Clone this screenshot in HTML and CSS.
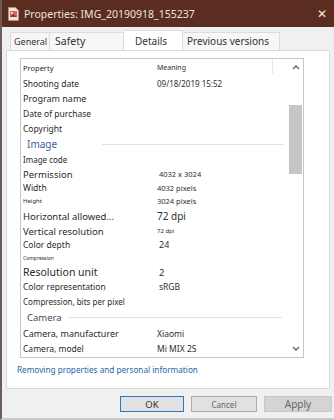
FILE: index.html
```html
<!DOCTYPE html>
<html lang="en">
<head>
  <meta charset="UTF-8"/>
  <title>Properties: IMG_20190918_155237</title>
  <link rel="stylesheet" href="styles.css">
</head>
<body>
  <div class="window">
    <div class="titlebar">
      <svg class="fileicon" width="11" height="14" viewBox="0 0 11 14">
        <path d="M0.5 0.5 H7.5 L10.5 3.5 V13.5 H0.5 Z" fill="#f1e2dd" stroke="#b98a82"/>
        <rect x="2" y="4" width="7" height="6" fill="#cf6a60"/>
        <rect x="3" y="5" width="2" height="2" fill="#f2d0c8"/>
        <path d="M2 10 L5 7 L9 10 Z" fill="#8a3a32"/>
      </svg>
      <span class="title">Properties: IMG_20190918_155237</span>
      <span class="close">&#x2715;</span>
    </div>

    <div class="tabs">
      <div class="tab tab-general">General</div>
      <div class="tab tab-safety">Safety</div>
      <div class="tab tab-details active">Details</div>
      <div class="tab tab-prev">Previous versions</div>
    </div>

    <div class="panel">
      <div class="listbox">
        <div class="list">
          <div class="row head h17"><span class="k f75">Property</span><span class="v f7">Meaning</span></div>
          <div class="row h15"><span class="k f85">Shooting date</span><span class="v f8">09/18/2019 15:52</span></div>
          <div class="row h15"><span class="k f9">Program name</span></div>
          <div class="row h14"><span class="k f85">Date of purchase</span></div>
          <div class="row h16"><span class="k f85">Copyright</span></div>
          <div class="section h16"><span class="sec-title sec-image">Image</span><span class="sec-line line-image"></span></div>
          <div class="row h15"><span class="k f8">Image code</span></div>
          <div class="row h14"><span class="k f95">Permission</span><span class="v f75 nudge">4032 x 3024</span></div>
          <div class="row h13"><span class="k f85">Width</span><span class="v f75">4032 pixels</span></div>
          <div class="row h14"><span class="k f6">Height</span><span class="v f75">3024 pixels</span></div>
          <div class="row h16"><span class="k f95">Horizontal allowed...</span><span class="v f10">72 dpi</span></div>
          <div class="row h14"><span class="k f95">Vertical resolution</span><span class="v f6">72 dpi</span></div>
          <div class="row h13"><span class="k f85">Color depth</span><span class="v f9 nudge">24</span></div>
          <div class="row h14"><span class="k f5">Compression</span></div>
          <div class="row h14"><span class="k f105">Resolution unit</span><span class="v f95 nudge">2</span></div>
          <div class="row h14"><span class="k f85">Color representation</span><span class="v f85 nudge">sRGB</span></div>
          <div class="row h16"><span class="k f8">Compression, bits per pixel</span></div>
          <div class="section h17"><span class="sec-title sec-camera">Camera</span><span class="sec-line line-camera"></span></div>
          <div class="row h15"><span class="k f9">Camera, manufacturer</span><span class="v f85">Xiaomi</span></div>
          <div class="row h15"><span class="k f85">Camera, model</span><span class="v f85">Mi MIX 2S</span></div>
        </div>
        <div class="scrollbar">
          <div class="arrow">
            <svg width="8" height="5" viewBox="0 0 8 5"><path d="M1 4 L4 1 L7 4" fill="none" stroke="#606060" stroke-width="1.3"/></svg>
          </div>
          <div class="track"><div class="thumb"></div></div>
          <div class="arrow">
            <svg width="8" height="5" viewBox="0 0 8 5"><path d="M1 1 L4 4 L7 1" fill="none" stroke="#606060" stroke-width="1.3"/></svg>
          </div>
        </div>
      </div>
      <a class="link" href="#">Removing properties and personal information</a>
    </div>

    <div class="buttons">
      <button class="btn btn-ok">OK</button>
      <button class="btn btn-cancel">Cancel</button>
      <button class="btn btn-apply">Apply</button>
    </div>
  </div>
</body>
</html>
```

FILE: styles.css
```css
body { margin:0; background:#f0f0f0; font-family:"Noto Sans", "Open Sans", sans-serif; color:#222; }
.window { width:332px; height:418px; border-left:2px solid #6d5d58; border-bottom:2px solid #c9c9c9; background:#f0f0f0; overflow:hidden; }

.titlebar { height:27px; background:#5b2d20; display:flex; align-items:center; padding-left:6px; }
.fileicon { margin-right:5px; }
.title { color:#eee3df; font-size:10.5px; flex:1; }
.close { color:#f3eae7; font-size:12px; margin-right:7px; }

.tabs { height:20px; margin-top:3px; padding-left:8px; display:flex; align-items:flex-end; }
.tab { height:18px; box-sizing:border-box; background:#f7f7f7; border:1px solid #dcdcdc; border-bottom:none; color:#333; line-height:17px; }
.tab-general { width:40px; font-size:9px; padding-left:3px; }
.tab-safety { width:74px; font-size:10.5px; padding-left:5px; border-left:none; }
.tab-details { width:59px; font-size:10px; padding-left:11px; height:20px; background:#fff; border-left:none; line-height:20px; }
.tab-prev { width:97px; font-size:10px; padding-left:4px; border-left:none; }

.panel { margin-left:4px; width:324px; height:339px; box-sizing:border-box; background:#fff; border:1px solid #dadada; padding:7px 0 0 13px; }

.listbox { width:284px; height:300px; box-sizing:border-box; border:1px solid #c6c6c6; display:flex; }
.list { flex:1; }
.row { display:grid; grid-template-columns:134px 1fr; padding-left:2px; align-items:center; white-space:nowrap; }
.head { position:relative; }
.head::after { content:""; position:absolute; left:251px; top:0; bottom:2px; border-left:1px solid #e6e6e6; }
.k { color:#2a2a2a; }
.v { color:#2e2e2e; }
.nudge { padding-left:2px; }

.section { display:flex; align-items:center; padding-left:6px; }
.sec-title { font-size:10px; }
.sec-image { color:#3c5d98; }
.sec-camera { color:#404a58; font-size:9.5px; }
.sec-line { height:1px; background:#d9e4ea; }
.line-image { margin-left:45px; width:182px; }
.line-camera { margin-left:6px; width:214px; }

.h13 { height:13px; } .h14 { height:14px; } .h15 { height:15px; } .h16 { height:16px; } .h17 { height:17px; }
.f5 { font-size:5px; } .f6 { font-size:6px; } .f7 { font-size:7px; } .f75 { font-size:7.5px; }
.f8 { font-size:8px; } .f85 { font-size:8.5px; } .f9 { font-size:9px; } .f95 { font-size:9.5px; }
.f10 { font-size:10px; } .f105 { font-size:10.5px; }

.scrollbar { width:15px; display:flex; flex-direction:column; background:#fff; }
.arrow { height:17px; display:flex; align-items:center; justify-content:center; }
.track { flex:1; padding-top:29px; }
.thumb { margin:0 1px; height:69px; background:#c6c6c6; }

.link { display:block; margin:6px 0 0 -3px; font-size:8.2px; color:#2a64a8; text-decoration:none; }

.buttons { display:flex; gap:7px; padding:7px 0 0 118px; }
.btn { height:16px; box-sizing:border-box; border:1px solid #adadad; background:#e1e1e1; font-family:"Noto Sans", sans-serif; padding:0; color:#333; }
.btn-ok { width:64px; border-color:#2b78c2; font-size:9.5px; }
.btn-cancel { width:66px; font-size:8px; color:#666; }
.btn-apply { width:68px; background:#d4d4d4; border-color:#c8c8c8; font-size:10px; color:#666; }
```
